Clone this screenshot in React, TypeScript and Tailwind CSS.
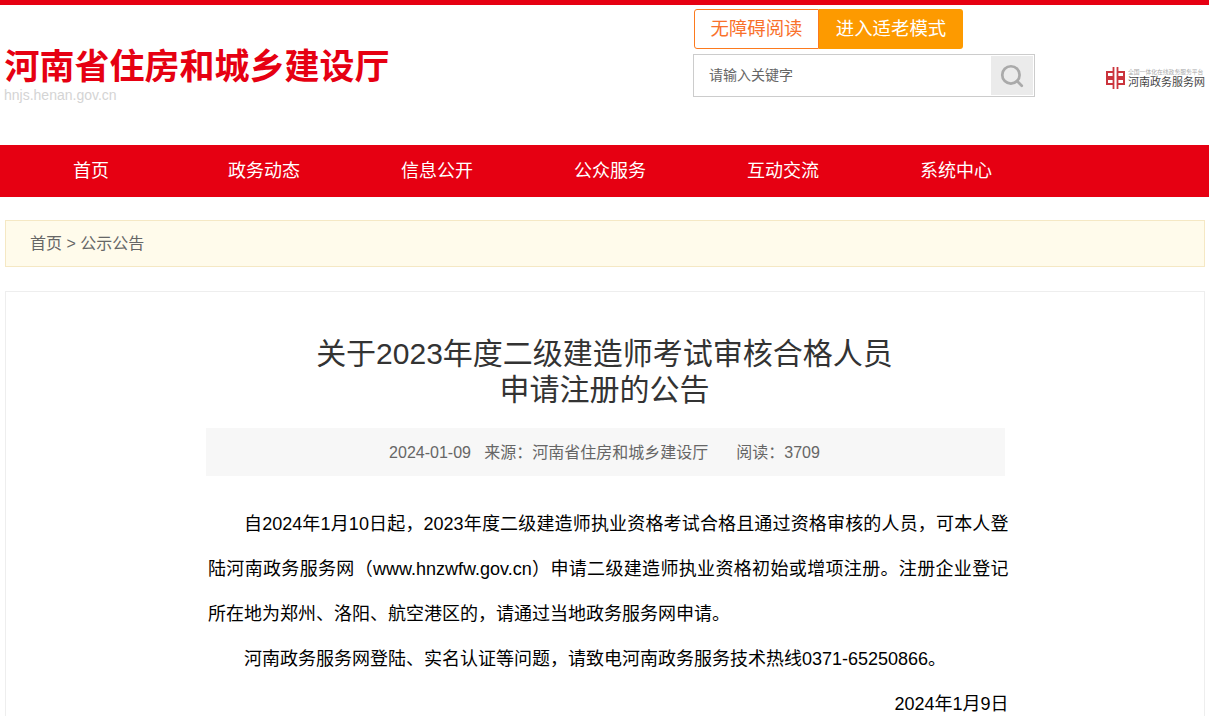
import { Search } from 'lucide-react'

const font = 'font-["Liberation_Sans","Noto_Sans_CJK_SC",sans-serif]'

const navItems = ['首页', '政务动态', '信息公开', '公众服务', '互动交流', '系统中心']

function ZwfwLogo() {
  return (
    <svg width="19" height="22" viewBox="0 0 19 22" fill="none" stroke="#cb343c" strokeWidth="2">
      <path d="M7.5 0v22M11.5 0v22" strokeWidth="1.8" />
      <path d="M7.5 5H1v5h6.500M11.500 5H18v5h-6.500M7.500 17H1v-5h6.500M11.500 17H18v-5h-6.500" />
    </svg>
  )
}

export default function App() {
  return (
    <div className={`${font} h-[716px] overflow-hidden bg-white`}>
      <div className="h-[5px] bg-[#e60012]" />

      <header className="flex h-[140px] pl-[5px]">
        <div className="w-[688px] pt-[40px]">
          <h1 className="-ml-[0.5px] text-[35px] leading-[44px] font-bold text-[#e60012] whitespace-nowrap">河南省住房和城乡建设厅</h1>
          <p className="-ml-[1px] -mt-[2px] text-sm leading-[16px] text-[#d4d4d4]">hnjs.henan.gov.cn</p>
        </div>

        <div className="w-[342px] pt-[4px]">
          <div className="ml-[1px] flex h-[40px]">
            <button className="w-[125px] rounded-l-[3px] border border-[#fc7a1e] text-[18.4px] text-[#f9712b]">无障碍阅读</button>
            <button className="w-[144px] rounded-r-[3px] bg-[#fd9a00] text-[18.4px] text-white">进入适老模式</button>
          </div>
          <div className="mt-[5px] flex h-[43px] items-center border border-[#cccccc] pr-[1px]">
            <span className="flex-1 pb-[2px] pl-[15px] text-sm text-[#666666]">请输入关键字</span>
            <span className="flex h-[39px] w-[42px] items-center justify-center bg-[#ebebeb]">
              <Search size={26} strokeWidth={2.5} className="text-[#aaaaaa]" />
            </span>
          </div>
        </div>

        <div className="flex-1 pt-[62px] pl-[71px]">
          <div className="flex items-center gap-[3px]">
            <ZwfwLogo />
            <div className="whitespace-nowrap">
              <p className="w-[76px] overflow-hidden text-[5.8px] leading-[8px] text-[#aaaaaa]">全国一体化在线政务服务平台</p>
              <p className="text-[11px] leading-[13px] text-[#444444]">河南政务服务网</p>
            </div>
          </div>
        </div>
      </header>

      <nav className="flex h-[52px] items-center bg-[#e60012] pl-[4.5px]">
        {navItems.map((item) => (
          <a key={item} className="w-[173px] text-center text-lg text-white">{item}</a>
        ))}
      </nav>

      <main className="pr-[4px] pl-[5px]">
        <div className="mt-[23px] flex h-[47px] items-center border border-[#f5e8c4] bg-[#fffbeb] pl-[24px] text-base text-[#666666]">
          首页 &gt; 公示公告
        </div>

        <article className="mt-[24px] border border-[#eeeeee] pt-[44px]">
          <h2 className="pr-[1px] text-center text-[30px] leading-[36px] text-[#333333]">
            关于2023年度二级建造师考试审核合格人员<br />申请注册的公告
          </h2>
          <div className="mx-auto mt-[20px] flex h-[48px] w-[799px] items-center justify-center gap-[28px] bg-[#f7f7f7] pt-[1px] pr-[1px] text-base text-[#666666]">
            <span>2024-01-09&nbsp;&nbsp;&nbsp;来源：河南省住房和城乡建设厅</span>
            <span>阅读：3709</span>
          </div>
          <div className="ml-[202px] mt-[26px] w-[800.5px] text-justify text-lg leading-[45px] text-black">
            <p className="indent-[36px]">自2024年1月10日起，2023年度二级建造师执业资格考试合格且通过资格审核的人员，可本人登陆河南政务服务网（www.hnzwfw.gov.cn）申请二级建造师执业资格初始或增项注册。注册企业登记所在地为郑州、洛阳、航空港区的，请通过当地政务服务网申请。</p>
            <p className="indent-[36px]">河南政务服务网登陆、实名认证等问题，请致电河南政务服务技术热线0371-65250866。</p>
            <p className="text-right">2024年1月9日</p>
          </div>
        </article>
      </main>
    </div>
  )
}
